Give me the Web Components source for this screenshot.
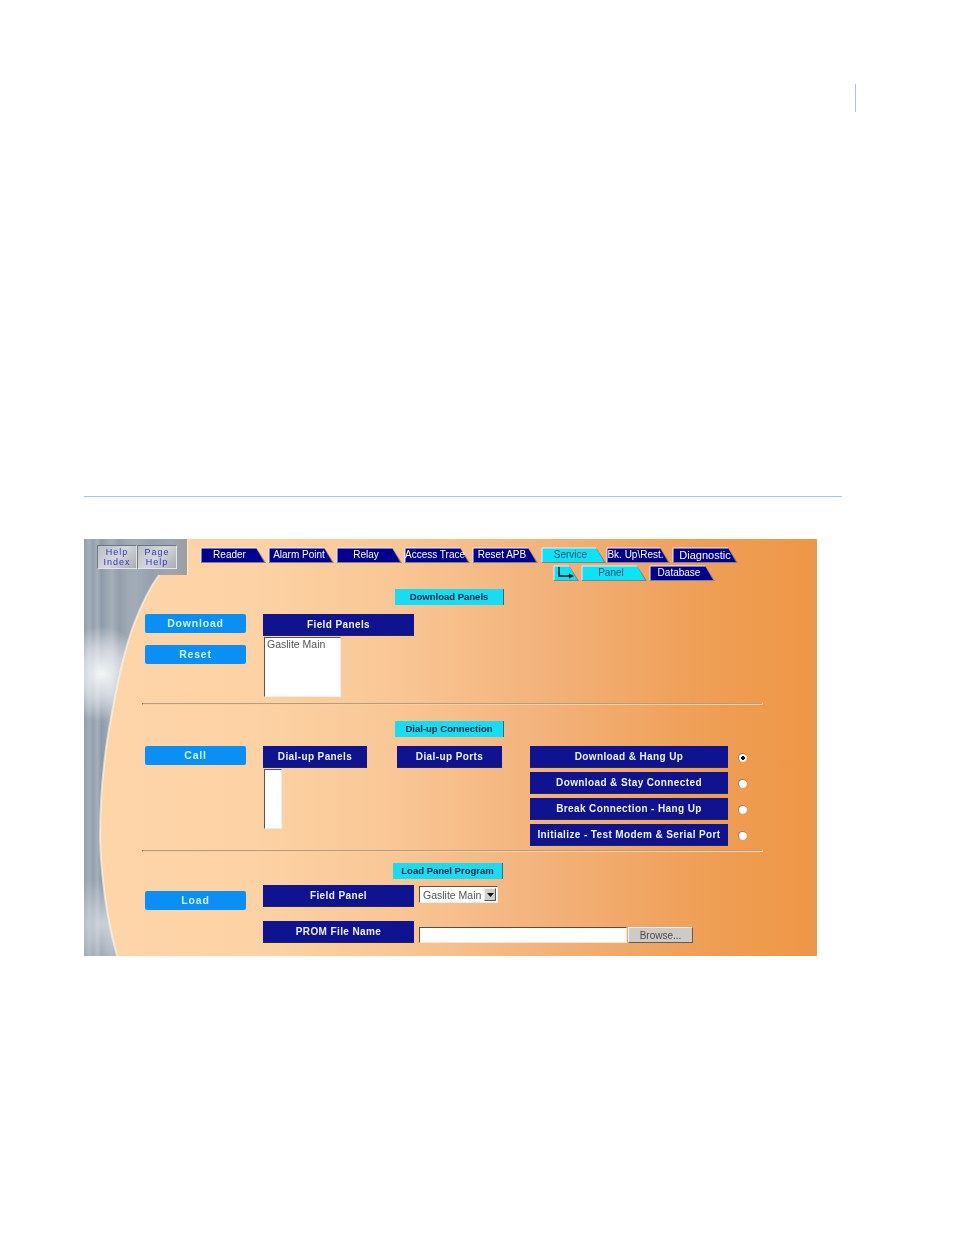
<!DOCTYPE html>
<html>
<head>
<meta charset="utf-8">
<title>Service - Panel</title>
<style>
  html, body { margin: 0; background: #fff; }
  body { font-family: "Liberation Sans", Arial, sans-serif; }
  .tick { width: 1px; height: 28px; margin: 84px 0 0 855px; background: #a9c3e8; }
  .line { width: 758px; height: 1px; margin: 384px 0 0 84px; background: #a9c3e8; }
  panel-screen { margin: 42px 0 0 84px; }
</style>
</head>
<body>
<div class="tick"></div>
<div class="line"></div>

<panel-screen>
  <nav-row slot="help">
    <help-key>Help<br>Index</help-key><help-key>Page<br>Help</help-key>
  </nav-row>
  <nav-row slot="tabs">
    <nav-tab pad="7">Reader</nav-tab>
    <nav-tab pad="4">Alarm Point</nav-tab>
    <nav-tab>Relay</nav-tab>
    <nav-tab pad="4">Access Trace</nav-tab>
    <nav-tab gap="3">Reset APB</nav-tab>
    <nav-tab active w="65" gap="0">Service</nav-tab>
    <nav-tab w="64" pad="5">Bk. Up\Rest.</nav-tab>
    <nav-tab big>Diagnostic</nav-tab>
  </nav-row>
  <nav-row slot="subtabs">
    <nav-tab active arrow w="26"></nav-tab>
    <nav-tab active>Panel</nav-tab>
    <nav-tab>Database</nav-tab>
  </nav-row>

  <panel-section slot="s1" caption="Download Panels">
    <action-key slot="actions">Download</action-key>
    <action-key slot="actions">Reset</action-key>
    <navy-label w="151">Field Panels</navy-label>
    <list-box w="77" h="60">Gaslite Main</list-box>
  </panel-section>

  <panel-section slot="s2" caption="Dial-up Connection">
    <action-key slot="actions">Call</action-key>
    <dial-up-body></dial-up-body>
  </panel-section>

  <panel-section slot="s3" caption="Load Panel Program" cx="-2" cw="110" drop="6">
    <action-key slot="actions">Load</action-key>
    <load-body></load-body>
  </panel-section>
</panel-screen>

<script>
// small helper, every element here is just a shadow root with some styles
function shadow(el, html) {
  el.attachShadow({ mode: 'open' }).innerHTML = html;
}

const SWOOSH = 'C66 48 58 64 50 85C41 108 32 150 25 190C19 225 16 265 16 300C17 340 24 385 33 417';

class PanelScreen extends HTMLElement {
  connectedCallback() {
    shadow(this, `
      <style>
        :host {
          display: block;
          position: relative;
          width: 733px;
          height: 417px;
          overflow: hidden;
          background:
            linear-gradient(90deg, #fdd5a8 0%, #fdd3a5 22%, #f9c795 42%, #f3b37c 62%, #ef9e55 85%, #ee9745 100%);
          filter: blur(.3px);
        }
        svg { position: absolute; left: 0; top: 0; }
        .top { position: relative; display: flex; height: 50px; }
        .help { margin: 6px 0 0 13px; width: 80px; height: 24px; }
        .tabs { margin: 8px 0 0 23px; }
        .sub { margin: 2px 0 0 353px; }
        .rule {
          position: relative;
          width: 619px; height: 1px; margin-left: 58px;
          background: #b89a7c;
          border-bottom: 1px solid #f5cfa6;
          border-left: 1px solid #8a7460;
          border-right: 1px solid #e9c7a0;
        }
        .r1 { margin-top: 6px; }
        .r2 { margin-top: 4px; }
      </style>
      <svg width="733" height="417" viewBox="0 0 733 417">
        <defs>
          <linearGradient id="m" x1="0" x2="1" y1="0" y2="0">
            <stop offset="0" stop-color="#939fad"/>
            <stop offset=".05" stop-color="#a4aeb9"/>
            <stop offset=".09" stop-color="#93a0ae"/>
            <stop offset=".13" stop-color="#a6b0bb"/>
            <stop offset=".17" stop-color="#8d9aa9"/>
            <stop offset=".22" stop-color="#9aa6b2"/>
            <stop offset=".27" stop-color="#a5afba"/>
            <stop offset=".34" stop-color="#929eac"/>
            <stop offset=".42" stop-color="#9fa9b4"/>
            <stop offset=".5" stop-color="#a2acb7"/>
            <stop offset=".66" stop-color="#95a1ae"/>
            <stop offset=".85" stop-color="#a0a6ab"/>
            <stop offset="1" stop-color="#9c9ea1"/>
          </linearGradient>
          <radialGradient id="g" cx="18" cy="135" r="1" gradientUnits="userSpaceOnUse" gradientTransform="translate(18 135) scale(42 48) translate(-18 -135)">
            <stop offset="0" stop-color="#fff" stop-opacity=".9"/>
            <stop offset=".5" stop-color="#f4f6f8" stop-opacity=".6"/>
            <stop offset="1" stop-color="#fff" stop-opacity="0"/>
          </radialGradient>
          <radialGradient id="h" cx="18" cy="385" r="46" gradientUnits="userSpaceOnUse">
            <stop offset="0" stop-color="#e6ebef" stop-opacity=".65"/>
            <stop offset="1" stop-color="#e6ebef" stop-opacity="0"/>
          </radialGradient>
          <clipPath id="c"><path d="M0 0H103V36H75${SWOOSH}H0Z"/></clipPath>
        </defs>
        <path d="M0 0H103V36H75${SWOOSH}H0Z" fill="url(#m)"/>
        <g clip-path="url(#c)">
          <rect y="60" width="90" height="150" fill="url(#g)"/>
          <rect y="330" width="70" height="87" fill="url(#h)"/>
        </g>
        <path d="M75 36${SWOOSH}" fill="none" stroke="#fff" stroke-opacity=".55" stroke-width="2"/>
        <path d="M103.500 0V36" stroke="#fff" stroke-opacity=".45"/>
      </svg>
      <div class="top">
        <div class="help"><slot name="help"></slot></div>
        <div class="tabs"><slot name="tabs"></slot><div class="sub"><slot name="subtabs"></slot></div></div>
      </div>
      <slot name="s1"></slot>
      <div class="rule r1"></div>
      <slot name="s2"></slot>
      <div class="rule r2"></div>
      <slot name="s3"></slot>
    `);
  }
}

class NavRow extends HTMLElement {
  connectedCallback() {
    shadow(this, `<style>:host { display: flex; }</style><slot></slot>`);
  }
}

class HelpKey extends HTMLElement {
  connectedCallback() {
    shadow(this, `
      <style>
        :host {
          display: block;
          box-sizing: border-box;
          width: 40px; height: 24px;
          text-align: center;
          font: 9px/10.4px "Liberation Sans", Arial, sans-serif;
          letter-spacing: 1px;
          color: #2e35c4;
          padding-top: 1px;
          background: linear-gradient(135deg, #b9bfc6, #d5d7da 50%, #a7adb4);
          border: 1px solid;
          border-color: #6e7680 #e4e6e8 #e4e6e8 #6e7680;
        }
      </style>
      <slot></slot>`);
  }
}

class NavTab extends HTMLElement {
  connectedCallback() {
    const active = this.hasAttribute('active');
    const big = this.hasAttribute('big');
    const arrow = this.hasAttribute('arrow');
    const w = +(this.getAttribute('w') || 66);
    const gap = this.getAttribute('gap') || 2;
    const pad = this.getAttribute('pad') || (big ? 0 : 6);
    const fill = active ? '#0ae4f6' : '#00008e';
    shadow(this, `
      <style>
        :host {
          display: block;
          position: relative;
          box-sizing: border-box;
          width: ${w}px; height: 16px;
          margin-right: ${gap}px;
          flex: none;
          text-align: center;
          font: ${big ? 11 : 10}px/16px "Liberation Sans", Arial, sans-serif;
          color: ${active ? '#1a4a6a' : '#fff'};
          padding-right: ${pad}px;
          white-space: nowrap;
        }
        svg { position: absolute; left: 0; top: 0; }
        span { position: relative; }
      </style>
      <svg width="${w}" height="16" viewBox="0 0 ${w} 16">
        <path d="M1 2H${w - 9}L${w} 16H1Z" fill="#7d7f93"/>
        <path d="M1 1H${w - 10}L${w - 2} 15H1Z" fill="${fill}"/>
        <path d="M1 15V1H${w - 10}" fill="none" stroke="#e6eefc" stroke-width="1"/>
        ${arrow ? '<path d="M6 2V11H17" fill="none" stroke="#111" stroke-width="1.5"/><path d="M16 8.500L21 11L16 13.500Z" fill="#111"/>' : ''}
      </svg>
      <span><slot></slot></span>`);
  }
}

class ActionKey extends HTMLElement {
  connectedCallback() {
    shadow(this, `
      <style>
        :host {
          display: block;
          box-sizing: border-box;
          width: 101px; height: 19px;
          background: #0a90f5;
          border-radius: 2px;
          color: #cdf2ff;
          text-align: center;
          font: bold 10.5px/18px "Liberation Sans", Arial, sans-serif;
          letter-spacing: .8px;
        }
      </style>
      <slot></slot>`);
  }
}

class NavyLabel extends HTMLElement {
  connectedCallback() {
    const w = this.getAttribute('w') || 151;
    shadow(this, `
      <style>
        :host {
          display: block;
          box-sizing: border-box;
          width: ${w}px; height: 22px;
          background: #0f1390;
          border-bottom: 1px solid #23264f;
          color: #eef2ff;
          text-align: center;
          white-space: nowrap;
          font: bold 10px/22px "Liberation Sans", Arial, sans-serif;
          letter-spacing: .39px;
        }
      </style>
      <slot></slot>`);
  }
}

class ListBox extends HTMLElement {
  connectedCallback() {
    shadow(this, `
      <style>
        :host {
          display: block;
          box-sizing: border-box;
          width: ${this.getAttribute('w')}px;
          height: ${this.getAttribute('h')}px;
          margin: 1px 0 0 1px;
          background: #fff;
          border: 1px solid;
          border-color: #555 #eee #eee #555;
          padding: 0 2px;
          color: #555;
          font: 10.5px/12px "Liberation Sans", Arial, sans-serif;
          overflow: hidden;
          white-space: nowrap;
        }
      </style>
      <slot></slot>`);
  }
}

class RadioDot extends HTMLElement {
  connectedCallback() {
    const on = this.hasAttribute('checked');
    shadow(this, `
      <style>
        :host {
          display: block;
          box-sizing: border-box;
          width: 9px; height: 9px;
          border-radius: 50%;
          background: ${on ? 'radial-gradient(circle, #111 0 1.6px, #fff 2.1px)' : '#fff'};
          border-top: 1px solid #8a8178;
          border-left: 1px solid #8a8178;
        }
      </style>`);
  }
}

class PanelSection extends HTMLElement {
  connectedCallback() {
    const cap = this.getAttribute('caption');
    const cx = +(this.getAttribute('cx') || 0);
    const cw = this.getAttribute('cw') || 109;
    const drop = this.getAttribute('drop') || 0;
    const first = cap === 'Download Panels';
    const third = cap === 'Load Panel Program';
    shadow(this, `
      <style>
        :host { display: block; position: relative; }
        .cap {
          box-sizing: border-box;
          width: ${cw}px; height: 16px;
          margin: ${first ? 0 : third ? 11 : 16}px 0 ${third ? 6 : 9}px ${311 + cx}px;
          background: #17dcf2;
          border-right: 1px solid #2b6c8a;
          color: #10233c;
          text-align: center;
          font: bold 9.500px/16px "Liberation Sans", Arial, sans-serif;
          white-space: nowrap;
        }
        .row {
          display: grid;
          grid-template-columns: 101px 1fr;
          column-gap: 17px;
          padding-left: 61px;
        }
        .left { display: flex; flex-direction: column; gap: 12px; padding-top: ${drop}px; }
      </style>
      <div class="cap">${cap}</div>
      <div class="row">
        <div class="left"><slot name="actions"></slot></div>
        <div><slot></slot></div>
      </div>`);
  }
}

class DialUpBody extends HTMLElement {
  connectedCallback() {
    const opts = ['Download &amp; Hang Up', 'Download &amp; Stay Connected', 'Break Connection - Hang Up', 'Initialize - Test Modem &amp; Serial Port'];
    shadow(this, `
      <style>
        :host { display: flex; }
        .ports { margin-left: 30px; }
        .opts { margin-left: 28px; display: flex; flex-direction: column; gap: 4px; }
        .opt { display: flex; align-items: center; gap: 10px; }
      </style>
      <div><navy-label w="104">Dial-up Panels</navy-label><list-box w="18" h="60"></list-box></div>
      <div class="ports"><navy-label w="105">Dial-up Ports</navy-label></div>
      <div class="opts">
        ${opts.map((t, i) => `<div class="opt"><navy-label w="198">${t}</navy-label><radio-dot ${i === 0 ? 'checked' : ''}></radio-dot></div>`).join('')}
      </div>`);
  }
}

class LoadBody extends HTMLElement {
  connectedCallback() {
    shadow(this, `
      <style>
        :host { display: flex; flex-direction: column; gap: 14px; font: 10.5px/14px "Liberation Sans", Arial, sans-serif; color: #555; }
        .r { display: flex; gap: 5px; }
        .sel {
          box-sizing: border-box;
          display: flex; justify-content: space-between; align-items: center;
          width: 79px; height: 17px; margin-top: 1px;
          padding: 0 1px 0 3px;
          background: #fff;
          border: 1px solid; border-color: #555 #eee #eee #555;
          white-space: nowrap;
        }
        .arr {
          box-sizing: border-box;
          width: 12px; height: 13px;
          background: #cfcfcf;
          border: 1px solid; border-color: #eee #555 #555 #eee;
          display: flex; align-items: center; justify-content: center;
        }
        .field { margin-top: 6px; display: flex; gap: 1px; }
        .inp {
          box-sizing: border-box;
          width: 208px; height: 16px;
          background: #fff;
          border: 1px solid; border-color: #5a4a3f #f4e8d8 #f4e8d8 #5a4a3f;
        }
        .btn {
          box-sizing: border-box;
          width: 65px; height: 16px;
          background: #cdcbc8;
          border: 1px solid; border-color: #eee #5b5b5b #5b5b5b #eee;
          text-align: center;
          font-size: 10px;
          line-height: 15px;
          color: #4a4a4a;
        }
      </style>
      <div class="r">
        <navy-label w="151">Field Panel</navy-label>
        <div class="sel">Gaslite Main<span class="arr"><svg width="7" height="4" viewBox="0 0 7 4"><path d="M0 0H7L3.500 4Z" fill="#111"/></svg></span></div>
      </div>
      <div class="r">
        <navy-label w="151">PROM File Name</navy-label>
        <div class="field"><div class="inp"></div><div class="btn">Browse...</div></div>
      </div>`);
  }
}

customElements.define('panel-screen', PanelScreen);
customElements.define('nav-row', NavRow);
customElements.define('help-key', HelpKey);
customElements.define('nav-tab', NavTab);
customElements.define('action-key', ActionKey);
customElements.define('navy-label', NavyLabel);
customElements.define('list-box', ListBox);
customElements.define('radio-dot', RadioDot);
customElements.define('panel-section', PanelSection);
customElements.define('dial-up-body', DialUpBody);
customElements.define('load-body', LoadBody);
</script>
</body>
</html>
